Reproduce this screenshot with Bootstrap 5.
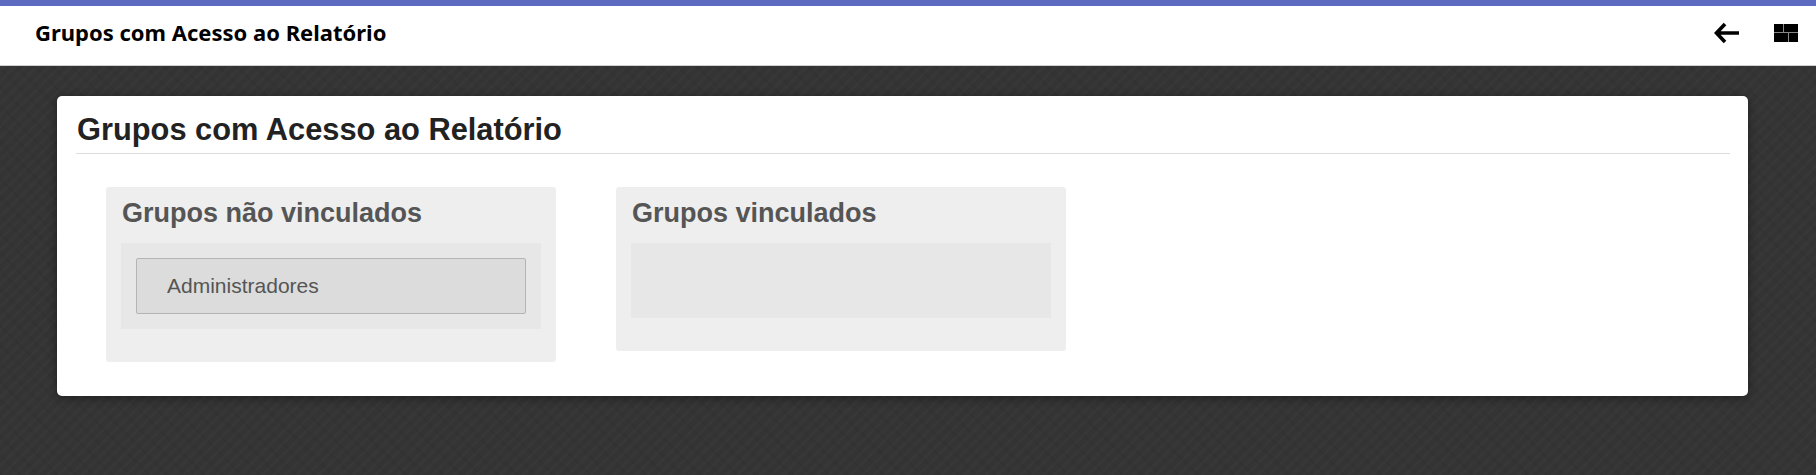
<!DOCTYPE html>
<html lang="pt-BR">
<head>
<meta charset="utf-8">
<title>Grupos com Acesso ao Relatório</title>
<link href="https://cdn.jsdelivr.net/npm/bootstrap@5.3.0/dist/css/bootstrap.min.css" rel="stylesheet">
<style>
html, body { height: 100%; }
body {
  font-family: "Liberation Sans", Arial, sans-serif;
  overflow: hidden;
  background-color: #343434;
  background-image:
    repeating-linear-gradient(135deg, rgba(255,255,255,.014) 0 3px, transparent 3px 8px),
    repeating-linear-gradient(45deg, rgba(0,0,0,.035) 0 3px, transparent 3px 13px);
}
.top-head {
  height: 66px;
  padding: 0 18px 0 35px;
  background: #fff;
  border-top: 6px solid #5c6bc0;
  border-bottom: 1px solid #d0d0d0;
}
.head-title {
  font-family: "Noto Sans", sans-serif;
  font-size: 22px;
  font-weight: 700;
  line-height: 1;
  color: #000;
  margin: 0 0 7px;
}
.head-icons { gap: 35px; margin-bottom: 5px; }
.sheet {
  margin: 30px 68px 0 57px;
  height: 300px;
  padding: 16px 18px 0 19px;
  background: #fff;
  border-radius: 5px;
  box-shadow: 0 2px 10px rgba(0,0,0,.4);
}
.sheet-title {
  font-size: 30.8px;
  font-weight: 700;
  line-height: 36px;
  color: #222;
  margin: 0;
  padding: 0 0 5px 1px;
  border-bottom: 1px solid #ddd;
}
.panes { gap: 60px; padding: 33px 0 0 30px; }
.pane {
  width: 450px;
  padding: 0 15px 33px;
  background: #eee;
  border-radius: 3px;
}
.pane-title {
  font-size: 27px;
  font-weight: 700;
  line-height: 53px;
  color: #555;
  margin: 0 0 3px 1px;
}
.drop {
  background: #e7e7e7;
  padding: 15px;
  min-height: 75px;
}
.drop-item {
  height: 56px;
  padding-left: 30px;
  font-size: 21px;
  color: #555;
  background: #dcdcdc;
  border: 1px solid #b4b4b4;
  border-radius: 2px;
}
</style>
</head>
<body>
<header class="top-head d-flex align-items-center justify-content-between">
  <h1 class="head-title">Grupos com Acesso ao Relatório</h1>
  <div class="head-icons d-flex align-items-center">
    <svg width="25" height="22" viewBox="0 0 25 22" role="img" aria-label="Voltar">
      <path d="M25 11H3M11 2 2.5 11 11 20" fill="none" stroke="#000" stroke-width="3.6"/>
    </svg>
    <svg width="24" height="18" viewBox="0 0 24 18" role="img" aria-label="Menu">
      <path fill="#000" d="M0 0h24v18H0z"/>
      <path fill="#888" d="M9 0h1v8H9zM0 8h24v1H0zM14 9h1v9h-1z"/>
    </svg>
  </div>
</header>
<main class="sheet">
  <h2 class="sheet-title">Grupos com Acesso ao Relatório</h2>
  <div class="panes d-flex align-items-start">
    <section class="pane">
      <h3 class="pane-title">Grupos não vinculados</h3>
      <div class="drop">
        <div class="drop-item d-flex align-items-center">Administradores</div>
      </div>
    </section>
    <section class="pane">
      <h3 class="pane-title">Grupos vinculados</h3>
      <div class="drop"></div>
    </section>
  </div>
</main>
<script src="https://cdn.jsdelivr.net/npm/bootstrap@5.3.0/dist/js/bootstrap.bundle.min.js"></script>
</body>
</html>
